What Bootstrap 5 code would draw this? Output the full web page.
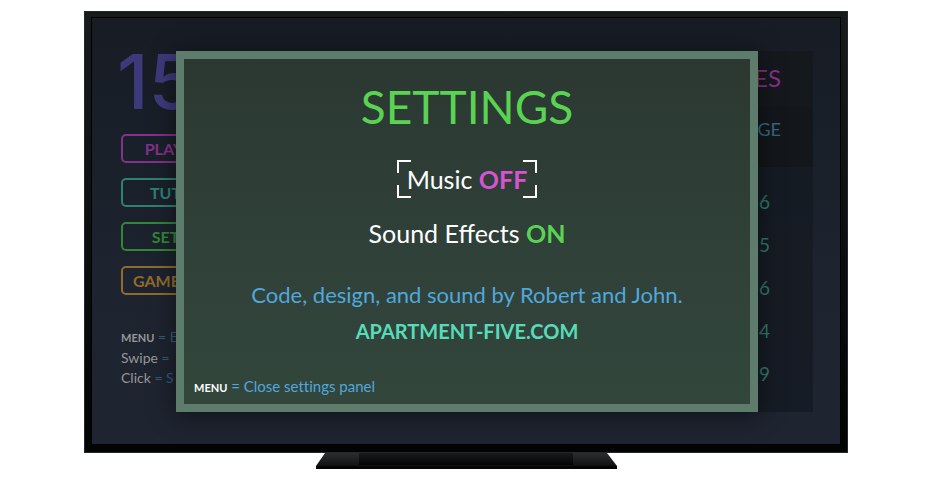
<!DOCTYPE html>
<html lang="en">
<head>
<meta charset="utf-8">
<meta name="viewport" content="width=device-width, initial-scale=1">
<title>Settings</title>
<link href="https://cdn.jsdelivr.net/npm/bootstrap@5.3.0/dist/css/bootstrap.min.css" rel="stylesheet">
<style>
  body { background: #fff; font-family: Lato, "Liberation Sans", sans-serif; font-variant-ligatures: none; }
  button { font-family: inherit; }
  .stage { padding: 11px 82px 0 84px; }
  .tv { background: linear-gradient(#181b1c, #0d1112 45%, #020303); padding: 7px 8px 9px; box-shadow: inset 0 0 0 1px #25282a; }
  .tv-screen { background: linear-gradient(#171b24, #192029 30%, #1d232f 60%, #1e2430); padding: 33px 27px 32px 29px; box-shadow: 0 0 0 1px #000; overflow: hidden; }
  .side { width: 136px; }
  .logo { font-family: Inter, sans-serif; font-size: 76px; font-weight: 500; line-height: 60px; color: #3d3a7c; margin: 0 0 23px -4px; }
  .menu-btn { height: 29px; padding: 0; border: 2px solid; border-radius: 5px; background: transparent; font-size: 16px; line-height: 24px; font-weight: 700; white-space: nowrap; }
  .menu-stack { gap: 15px; margin-bottom: 32px; }
  .c-play { color: #86308a; } .c-tut { color: #2f8173; } .c-set { color: #328734; } .c-game { color: #926b2b; }
  .hints { font-size: 14px; line-height: 20px; color: #969799; white-space: nowrap; }
  .hints span { color: #315d78; }
  .key { font-size: 11px; font-weight: 700; }
  .scores { width: 240px; background: rgba(20, 26, 33, .75); }
  .scores caption { caption-side: top; height: 56px; padding: 0 32px 0 0; background: #15181d; color: #86308a; font-size: 24px; line-height: 54px; text-align: right; }
  .scores th { height: 60px; padding: 0 32px 16px 0; background: #13161a; color: #376582; font-size: 18px; font-weight: 400; text-align: right; }
  .scores td { height: 43px; padding: 0 43px 0 0; color: #307667; font-size: 19px; text-align: right; }
  .scores tbody tr:first-child td { height: 57px; padding-top: 14px; }
  .scores tbody tr:last-child td { height: 59px; padding-bottom: 16px; }
  .overlay { padding: 33px 82px 32px 84px; }
  .dialog-box { border: 8px solid #5e7c6b; background: linear-gradient(#2b3832, #2f4038 50%, #32463c); box-shadow: 0 3px 22px rgba(0, 0, 0, .5); padding: 24px 10px 6px; }
  .title { font-size: 46px; line-height: 48px; font-weight: 400; color: #5ad353; margin: 0 0 29px; }
  .toggle-btn { border: 0; background: transparent; color: #fff; font-size: 25px; line-height: 38px; padding: 0 10px; }
  .toggle-btn b { font-weight: 700; }
  .is-off { color: #d653d3; } .is-on { color: #5ad353; }
  .focused {
    --c: linear-gradient(#fff, #fff);
    background: var(--c) 0 0 / 14px 2px, var(--c) 0 0 / 2px 13px, var(--c) 100% 0 / 14px 2px, var(--c) 100% 0 / 2px 13px,
      var(--c) 0 100% / 14px 2px, var(--c) 0 100% / 2px 13px, var(--c) 100% 100% / 14px 2px, var(--c) 100% 100% / 2px 13px;
    background-repeat: no-repeat; margin-bottom: 16px;
  }
  .credit { color: #51a8dc; font-size: 22px; line-height: 28px; margin: 29px 0 8px; }
  .site { color: #58dbb9; font-size: 20px; line-height: 28px; font-weight: 700; text-decoration: none; }
  .close-hint { color: #51a8dc; font-size: 15px; line-height: 20px; }
  .close-hint .key { color: #fff; }
  .stand { width: 302px; height: 18px; }
</style>
</head>
<body>
<main class="stage">
  <div class="tv">
    <div class="tv-screen position-relative d-flex justify-content-between">
      <div class="side">
        <div class="logo">15</div>
        <div class="menu-stack d-flex flex-column">
          <button type="button" class="menu-btn c-play">PLAY GAME</button>
          <button type="button" class="menu-btn c-tut">TUTORIAL</button>
          <button type="button" class="menu-btn c-set">SETTINGS</button>
          <button type="button" class="menu-btn c-game">GAME CENTER</button>
        </div>
        <div class="hints">
          <div><b class="key">MENU</b> <span>= E</span></div>
          <div>Swipe <span>=</span></div>
          <div>Click <span>= S</span></div>
        </div>
      </div>
      <table class="scores">
        <caption>TIMES</caption>
        <thead><tr><th scope="col">AVERAGE</th></tr></thead>
        <tbody>
          <tr><td>6</td></tr>
          <tr><td>5</td></tr>
          <tr><td>6</td></tr>
          <tr><td>4</td></tr>
          <tr><td>39</td></tr>
        </tbody>
      </table>
      <div class="overlay position-absolute top-0 start-0 w-100 h-100">
        <section class="dialog-box h-100 d-flex flex-column align-items-center" role="dialog" aria-labelledby="dialog-title">
          <h1 class="title" id="dialog-title">SETTINGS</h1>
          <button type="button" class="toggle-btn focused">Music <b class="is-off">OFF</b></button>
          <button type="button" class="toggle-btn">Sound Effects <b class="is-on">ON</b></button>
          <p class="credit">Code, design, and sound by Robert and John.</p>
          <a class="site" href="#">APARTMENT-FIVE.COM</a>
          <div class="close-hint mt-auto align-self-start"><b class="key">MENU</b> = Close settings panel</div>
        </section>
      </div>
    </div>
  </div>
  <svg class="stand d-block mx-auto" viewBox="0 0 302 18" aria-hidden="true">
    <defs>
      <linearGradient id="foot" x2="0" y2="1"><stop stop-color="#2c2d30"/><stop offset=".7" stop-color="#141517"/><stop offset="1" stop-color="#050505"/></linearGradient>
      <linearGradient id="neck" x2="0" y2="1"><stop stop-color="#191a1b"/><stop offset=".5" stop-color="#0e0f10"/><stop offset="1" stop-color="#030303"/></linearGradient>
    </defs>
    <path d="M10 0H292L302 13V16H1V13Z" fill="url(#foot)"/>
    <path d="M44 0H258V12H44Z" fill="url(#neck)"/>
    <path d="M1 13H302V15.500H1Z" fill="#050506"/>
  </svg>
</main>
<script src="https://cdn.jsdelivr.net/npm/bootstrap@5.3.0/dist/js/bootstrap.bundle.min.js"></script>
</body>
</html>
